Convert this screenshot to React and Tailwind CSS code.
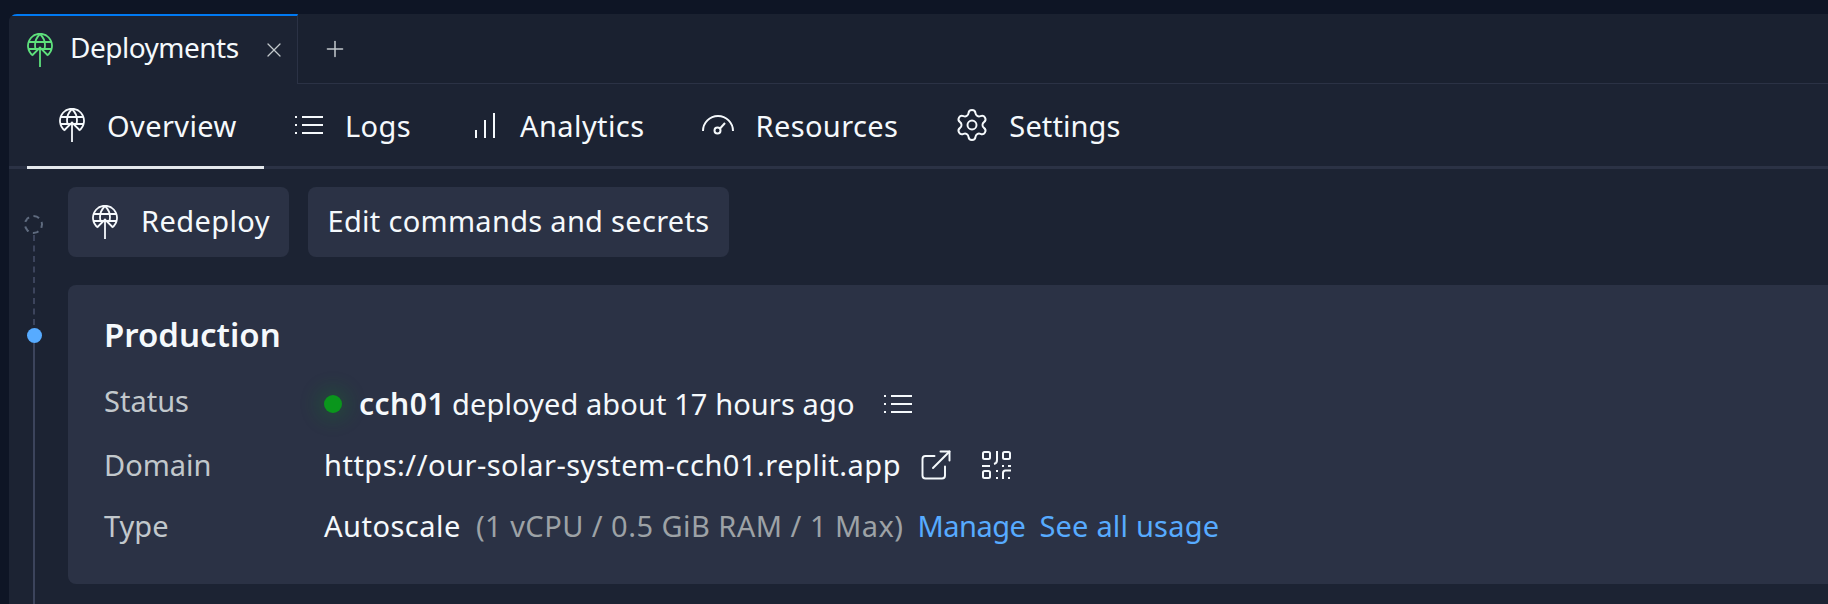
import React from 'react';
import { X, Plus, Settings, ExternalLink } from 'lucide-react';

const DeployIcon = ({ className }) => (
  <svg viewBox="0 0 26 34" fill="none" stroke="currentColor" strokeWidth="1.8" className={className}>
    <path d="M6 22.500A12 12 0 1 1 20 22.500" />
    <path d="M1.500 9h23M2 16h22" />
    <path d="M13 1C9.500 4.500 8 8.500 8 12c0 2 .3 3.500.8 5M13 1c3.500 3.500 5 7.500 5 11 0 2-.3 3.500-.8 5" />
    <path d="M13 34V14.500M5.500 22l7.500-7.500 7.500 7.500" />
  </svg>
);

const ListIcon = ({ className }) => (
  <svg viewBox="0 0 28 20" fill="none" stroke="currentColor" strokeWidth="2" className={className}>
    <path d="M7 2h21M7 10h21M7 18h21" />
    <path d="M1 1v2M1 9v2M1 17v2" />
  </svg>
);

const BarsIcon = ({ className }) => (
  <svg viewBox="0 0 22 26" fill="none" stroke="currentColor" strokeWidth="2" className={className}>
    <path d="M2 18v8M11 8v18M20 1v25" />
  </svg>
);

const GaugeIcon = ({ className }) => (
  <svg viewBox="0 0 32 20" fill="none" stroke="currentColor" strokeWidth="2" className={className}>
    <path d="M1 16A15 15 0 0 1 31 16" />
    <circle cx="15.500" cy="15.500" r="3" />
    <path d="M18 13.500l5-5.500" />
  </svg>
);

const QrIcon = ({ className }) => (
  <svg viewBox="0 0 29 28" fill="none" stroke="currentColor" strokeWidth="2" className={className}>
    <rect x="1" y="1" width="7" height="7" rx="1.500" />
    <rect x="1" y="20" width="7" height="7" rx="1.500" />
    <rect x="21" y="1" width="7" height="7" rx="1.500" />
    <path d="M15 0v9a4 4 0 0 1-3 4" />
    <path d="M0 15h8M20 15h2M26 15h3M15 19v2M15 26v2" />
    <path d="M21 28v-6a2.500 2.500 0 0 1 2.500-2.500H29M27 26v2" />
  </svg>
);

const tabs = [
  { label: 'Logs', icon: <ListIcon className="h-[20px] w-[28px]" />, cls: 'gap-[22px]' },
  { label: 'Analytics', icon: <BarsIcon className="h-[26px] w-[22px]" />, cls: 'ml-[5px] gap-[24px]' },
  { label: 'Resources', icon: <GaugeIcon className="h-[20px] w-[32px]" />, cls: 'gap-[21px]' },
  { label: 'Settings', icon: <Settings className="h-[36px] w-[36px]" strokeWidth={1.3} />, cls: '-ml-[2px] gap-[19px] tracking-[0.1px]' },
];

export default function App() {
  return (
    <div className="h-[604px] w-[1828px] overflow-hidden bg-[#0e1525] pl-[9px] pt-[14px] font-['Noto_Sans',sans-serif] text-[29px] text-[#f5f9fc]">
      <div className="h-full overflow-hidden rounded-tl-lg bg-[#1c2333]">
        <div className="flex h-[70px] border-b border-[#2b3245] bg-[#1a2130]">
          <div className="-mb-px flex w-[289px] items-center border-r border-t-2 border-r-[#2b3245] border-t-[#0079f2] bg-[#1c2333] pl-[18px]">
            <DeployIcon className="h-[34px] w-[26px] text-[#5ee07c]" />
            <span className="ml-[17px] pb-[6px] text-[28px] tracking-[-0.5px]">Deployments</span>
            <X className="ml-auto mr-[11px] h-[24px] w-[24px] text-[#c2c8cc]" strokeWidth={1.3} />
          </div>
          <div className="flex items-center pl-[24px]">
            <Plus className="h-[26px] w-[26px] text-[#c2c8cc]" strokeWidth={1.4} />
          </div>
        </div>

        <div className="flex h-[85px] border-b-[3px] border-[#2b3245] pl-[18px] tracking-[0.4px]">
          <div className="-mb-[3px] flex w-[237px] items-center border-b-[3px] border-[#e4e8ec] pl-[32px]">
            <DeployIcon className="h-[34px] w-[26px]" />
            <span className="ml-[22px] pt-[2px]">Overview</span>
          </div>
          <div className="ml-[31px] flex items-center gap-[58px]">
            {tabs.map((tab) => (
              <div key={tab.label} className={`flex items-center ${tab.cls}`}>
                {tab.icon}
                <span className="pt-[2px]">{tab.label}</span>
              </div>
            ))}
          </div>
        </div>

        <div className="flex">
          <div className="relative w-[59px] shrink-0">
            <div className="absolute left-[15px] top-[46px] h-[19px] w-[19px] rounded-full border-2 border-dashed border-[#5f6b7f]" />
            <div className="absolute left-[24px] top-[66px] h-[90px] border-l-2 border-dashed border-[#3c445c]" />
            <div className="absolute left-[18px] top-[159px] h-[15px] w-[15px] rounded-full bg-[#57abff]" />
            <div className="absolute left-[24px] top-[174px] h-[300px] w-[2px] bg-[#3c445c]" />
          </div>
          <div className="min-w-0 flex-1 pt-[18px]">
            <div className="flex gap-[19px]">
              <div className="flex h-[70px] w-[221px] items-center rounded-lg bg-[#2b3245] pl-[24px]">
                <DeployIcon className="h-[34px] w-[26px]" />
                <span className="ml-[23px] pb-[2px] tracking-[0.4px]">Redeploy</span>
              </div>
              <div className="flex h-[70px] w-[421px] items-center justify-center rounded-lg bg-[#2b3245] pb-[2px] tracking-[0.3px]">
                Edit commands and secrets
              </div>
            </div>
            <div className="mt-[28px] h-[299px] rounded-l-lg bg-[#2b3245] pl-[36px] pt-[30px]">
              <h2 className="text-[33px] leading-[40px] font-semibold">Production</h2>
              <div className="mt-[27px] grid grid-cols-[220px_1fr] gap-y-[23px] leading-[38px]">
                <span className="text-[#c2c8cc]">Status</span>
                <div className="flex items-center pt-[3px]">
                  <span className="h-[18px] w-[18px] rounded-full bg-[#0a961c] shadow-[0_0_18px_8px_rgba(10,150,28,0.18)]" />
                  <span className="ml-[17px] text-[30px] tracking-[0.5px] font-semibold">cch01</span>
                  <span className="ml-[7px] tracking-[0.1px]">deployed about 17 hours ago</span>
                  <ListIcon className="ml-[29px] h-[20px] w-[28px]" />
                </div>
                <span className="text-[#c2c8cc]">Domain</span>
                <div className="flex items-center">
                  <span className="tracking-[0.5px]">https://our-solar-system-cch01.replit.app</span>
                  <ExternalLink className="ml-[17px] h-[36px] w-[36px]" strokeWidth={1.3} />
                  <QrIcon className="ml-[28px] h-[28px] w-[29px]" />
                </div>
                <span className="text-[#c2c8cc]">Type</span>
                <div className="flex items-center">
                  <span className="tracking-[0.5px]">Autoscale</span>
                  <span className="ml-[15px] tracking-[0.47px] text-[#9da2a6]">(1 vCPU / 0.5 GiB RAM / 1 Max)</span>
                  <span className="ml-[14px] tracking-[-0.5px] text-[#57abff]">Manage</span>
                  <span className="ml-[14px] tracking-[0.2px] text-[#57abff]">See all usage</span>
                </div>
              </div>
            </div>
          </div>
        </div>
      </div>
    </div>
  );
}
